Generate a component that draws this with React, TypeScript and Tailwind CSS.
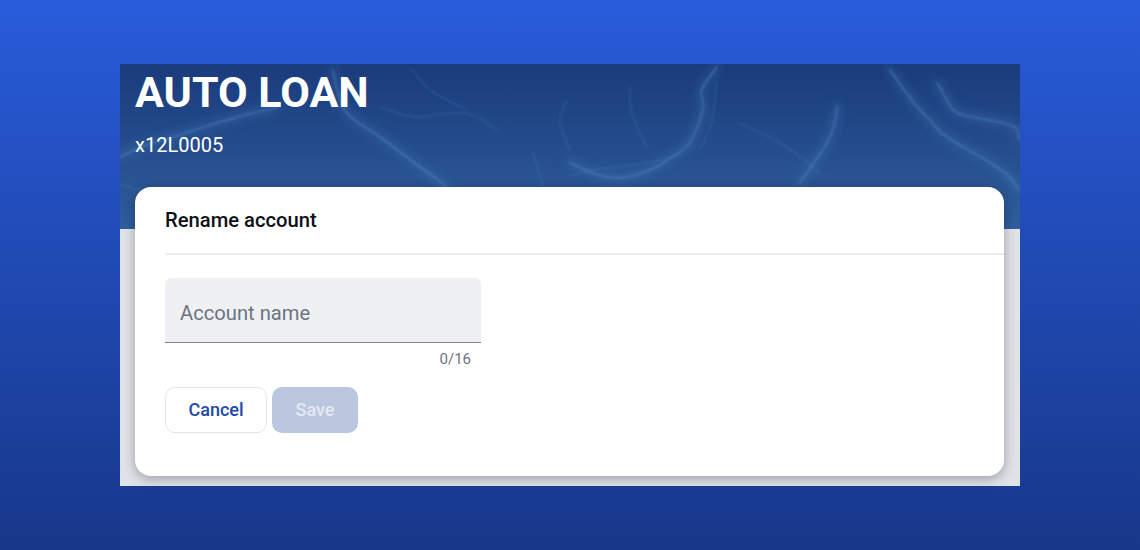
const font = { fontFamily: "Roboto, sans-serif" };

function WaterLines() {
  const bright = [
    "M0 93 C20 82 35 78 50 74 S85 62 100 58 S140 46 157 44",
    "M213 6 C216 25 220 40 227 49 S245 62 260 73 S285 92 300 103 S318 116 327 123",
    "M450 99 C470 108 480 113 493 114 S530 108 543 99 S568 85 573 73 S582 55 583 43 S578 32 583 23 S592 10 597 3",
    "M717 43 C716 58 712 70 707 79 S690 104 680 119",
    "M770 6 C780 20 790 36 803 49 S817 66 827 73 S860 92 877 103 S892 118 900 126",
    "M817 19 C824 30 828 40 833 46 S860 54 883 59 S895 70 900 76",
  ];
  const faint = [
    "M260 43 C280 50 290 54 300 53 S330 48 343 49 S365 58 377 66",
    "M290 3 C298 12 302 20 310 26 S335 40 347 46",
    "M413 89 C416 100 420 112 423 123",
    "M447 36 C442 44 440 52 440 59 S446 76 450 86",
    "M510 23 C509 34 510 44 513 53 S522 74 527 83",
    "M597 19 C595 30 595 42 593 53 S588 70 580 85",
    "M0 120 C30 128 50 140 70 165",
    "M620 60 C650 70 680 90 700 110",
    "M450 112 C480 100 520 105 560 90",
  ];
  return (
    <svg className="absolute inset-0 h-full w-full" viewBox="0 0 900 165" fill="none">
      <defs>
        <filter id="soft">
          <feGaussianBlur stdDeviation="1" />
        </filter>
        <filter id="haze">
          <feGaussianBlur stdDeviation="5" />
        </filter>
      </defs>
      <g filter="url(#haze)" strokeLinecap="round">
        {bright.map((d) => (
          <path key={d} d={d} stroke="#4a86c4" strokeOpacity="0.25" strokeWidth="8" />
        ))}
      </g>
      <g filter="url(#soft)" strokeLinecap="round">
        {bright.map((d) => (
          <path key={d} d={d} stroke="#5b94cc" strokeOpacity="0.45" strokeWidth="1.6" />
        ))}
        {faint.map((d) => (
          <path key={d} d={d} stroke="#5b94cc" strokeOpacity="0.2" strokeWidth="1.6" />
        ))}
      </g>
    </svg>
  );
}

export default function App() {
  return (
    <div
      className="h-[550px] w-[1140px] overflow-hidden bg-gradient-to-b from-[#295cdb] to-[#17378a] pt-16 pl-[120px]"
      style={font}
    >
      <div className="h-[422px] w-[900px] bg-[#dfe2e7]">
        {/* Banner */}
        <div className="relative h-[165px] bg-gradient-to-b from-[#1a3b7c] to-[#305e9c]">
          <WaterLines />
          <div className="relative px-[15px] text-white">
            <h1 className="pt-1 text-[43px] leading-[48px] font-bold">AUTO LOAN</h1>
            <p className="mt-[17px] text-[20px] leading-6">x12L0005</p>
          </div>
        </div>

        {/* Rename card */}
        <div className="relative mx-[15px] -mt-[42px] h-[289px] w-[869px] rounded-2xl bg-white shadow-[0_3px_12px_rgba(0,0,0,0.3)]">
          <div className="ml-[30px] flex h-[68px] items-center border-b-2 border-[#ebebeb] text-[20.2px] font-medium text-[#0d1117]">
            Rename account
          </div>
          <div className="ml-[30px] w-[316px] pt-[23px]">
            <div className="flex h-[65px] items-center rounded-t-md border-b border-[#7d8594] bg-[#eff0f4] px-[15px] pt-1.5 text-[20.2px] text-[#6b7480]">
              Account name
            </div>
            <div className="mt-[6px] pr-2.5 text-right text-[15px] leading-5 text-[#6b7480]">0/16</div>
            <div className="mt-[18px] flex gap-[5px]">
              <button className="h-[46px] w-[102px] rounded-[10px] border-[1.5px] border-[#e4e4e4] bg-white pb-[2px] text-[18px] font-medium text-[#1e4aa8]">
                Cancel
              </button>
              <button className="h-[46px] w-[86px] rounded-[10px] bg-[#bac7de] pb-[2px] text-[18px] font-medium text-[#e4e9f3]">
                Save
              </button>
            </div>
          </div>
        </div>
      </div>
    </div>
  );
}
